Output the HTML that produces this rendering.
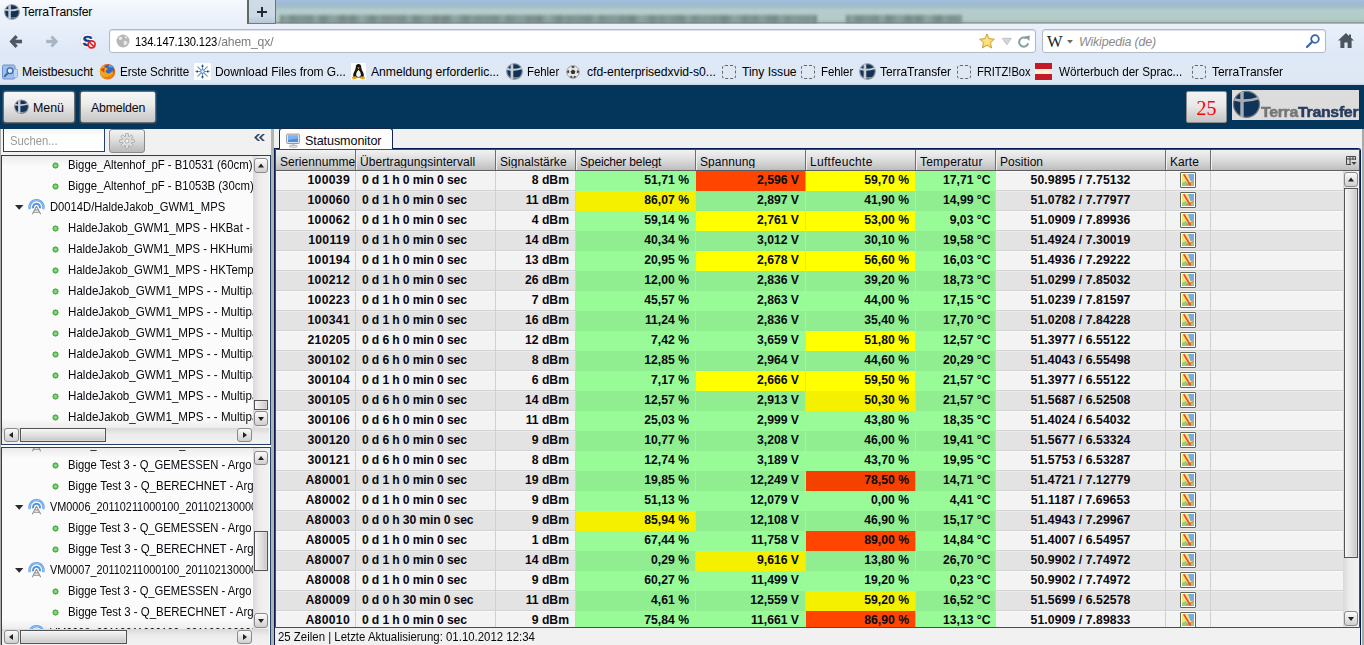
<!DOCTYPE html>
<html><head><meta charset="utf-8"><title>TerraTransfer</title>
<style>
*{box-sizing:border-box;margin:0;padding:0}
html,body{width:1364px;height:645px;overflow:hidden;background:#fff;font-family:"Liberation Sans",sans-serif;font-size:12px;color:#000}
.a{position:absolute}
svg{position:absolute;overflow:visible}
#chrome{left:0;top:0;width:1364px;height:85px;background:linear-gradient(#f6f9fd 0,#eef3fb 12px,#e9f0fa 24px,#e3ecf8 40px,#dde8f6 56px,#dfe9f6 62px,#dee8f5 83px,#c3cfde 85px)}
#glass{left:247px;top:0;width:1117px;height:24px;overflow:hidden;background:linear-gradient(#a3bfdf 0,#9fbad6 3px,#a2bbc6 6px,#b2cbcd 10px,#b4cdca 14px,#b3cbc6 19px,#a9bfba 22px,#6f7d78 23px,#e9f0f9 24px)}
.blr{position:absolute;top:15px;height:8px;background:repeating-linear-gradient(to right,rgba(80,96,94,.40) 0,rgba(80,96,94,.12) 5px,rgba(80,96,94,.44) 11px,rgba(80,96,94,.10) 19px,rgba(80,96,94,.40) 31px),repeating-linear-gradient(to right,rgba(80,96,94,.30) 0,rgba(80,96,94,.05) 9px,rgba(80,96,94,.34) 17px,rgba(80,96,94,.08) 36px,rgba(80,96,94,.30) 47px),rgba(96,112,110,.18);filter:blur(1.800px)}
#newtab{left:247px;top:0;width:29px;height:24px;background:linear-gradient(#d0dbe8,#ccd8e4 70%,#b9c6d6);border-left:2px solid #5f6a60;border-right:1px solid #6a756e;border-bottom:1px solid #6f7a80}
.tabtitle{left:22px;top:5px;font-size:12.2px;color:#000;letter-spacing:-0.2px}
.url{top:29px;height:24px;background:#fff;border:1px solid #b0b9c6;border-radius:3px;box-shadow:inset 0 1px 1px #dfe4ea}
.ut{top:35px;font-size:12.4px;white-space:nowrap;letter-spacing:-0.15px}
.bm{top:65px;font-size:12.2px;color:#000;white-space:nowrap;letter-spacing:-0.05px;transform-origin:0 0}
.dq{top:65px;width:14px;height:14px;border:1px dashed #686868;border-radius:3px}
#apphead{left:0;top:85px;width:1364px;height:44px;background:#03365a}
.btn{top:91px;height:32px;border:1px solid #6c6c6c;border-radius:2.500px;background:linear-gradient(#f6f6f6,#ececec 40%,#dedede 60%,#c6c6c6);font-size:12.400px;color:#08080f;line-height:32px;box-shadow:0 0 0 1px rgba(255,255,255,.10)}
#left{left:0;top:129px;width:271px;height:516px;background:#f1f1f1}
#split{left:271px;top:129px;width:3px;height:516px;background:#b2b2b2}
.tree{left:1px;width:270px;border:1px solid #23406c;background:#fbfbfb;overflow:hidden}
.ti{position:absolute;height:22px;line-height:22px;font-size:12.4px;white-space:nowrap;color:#08080f;letter-spacing:0;transform-origin:0 0;transform:scaleX(.915)}
.dot{position:absolute;width:7px;height:7px;border-radius:50%;background:radial-gradient(circle,#9ad494 0,#8fce8a 1.1px,#4db848 2px,#4db848 2.800px,rgba(255,255,255,.9) 3.400px)}
.vtrack{background:linear-gradient(to right,#d9d9d9,#ececec 40%,#f2f2f2)}
.htrack{background:linear-gradient(#d9d9d9,#ececec 40%,#f2f2f2)}
.sb{position:absolute;border:1px solid #8a8a8a;border-radius:3px;background:linear-gradient(#fbfbfb,#e3e3e3 55%,#cfcfcf)}
.th{position:absolute;border:1px solid #535353;border-radius:0;box-shadow:inset 0 0 0 1px rgba(255,255,255,.25)}
#right{left:274px;top:129px;width:1090px;height:516px;background:#f1f1f1}
#gridwrap{left:274px;top:148px;width:1087px;height:497px;border:1px solid #031d52;border-bottom:none;border-radius:0 3px 0 0;background:#f1f1f1}
#grid{left:275px;top:149px;width:1085px;height:479px;border:1px solid #4c4c4c;border-radius:0 2px 0 0;background:#f3f3f3;overflow:hidden}
#hdr{left:0;top:0;width:1084px;height:21px;background:linear-gradient(#f2f2f2,#dcdcdc 50%,#bdbdbd);border-bottom:1px solid #5e5e5e}
.h{position:absolute;top:0;height:20px;line-height:24px;box-shadow:1px 0 0 #f0f0f0;font-size:12px;padding-left:4px;border-right:1px solid #6e6e6e;overflow:hidden;white-space:nowrap;color:#08080f;letter-spacing:.05px}
.h span{display:block;height:18px;overflow:hidden}
.r{position:absolute;left:0;width:1068px;height:20px;background:#f3f3f3;border-bottom:1px solid #d2d2d2;border-top:1px solid #fafafa}
.r.o{background:#e3e3e3;border-top-color:#ececec}
.c{position:absolute;top:-1px;height:19px;line-height:19px;font-size:12.2px;font-weight:bold;border-right:1px solid #d0d0d0;white-space:nowrap;overflow:hidden;color:#08080f;letter-spacing:0}
.c1{left:0;width:80px;text-align:right;padding-right:5px;letter-spacing:.3px}
.c2{left:80px;width:140px;padding-left:6px;letter-spacing:-.15px}
.c3{left:220px;width:80px;text-align:right;padding-right:6px}
.c4{left:300px;width:120px;text-align:right;padding-right:6px}
.c5{left:420px;width:110px;text-align:right;padding-right:6px}
.c6{left:530px;width:110px;text-align:right;padding-right:6px}
.c7{left:640px;width:80px;text-align:right;padding-right:4.500px}
.c8{left:720px;width:170px;text-align:center;letter-spacing:.1px}
.c9{left:890px;width:45px}
.c10{left:935px;width:133px;border-right:none}
.g{background:#98fb98;height:20px;border-right-color:#b6e8b6}
.r.o .g{background:#90ee90}
.y{background:#ffff00;height:20px;border-right-color:#e0e070}
.r.o .y{background:#f4f000}
.rd{background:#ff4500;height:20px;border-right-color:#e0a080}
.r.o .rd{background:#f44100}
.mp{position:absolute;left:14px;top:1px;width:16px;height:16px}
</style></head><body>
<div id="chrome" class="a"></div>
<div id="glass" class="a"><div class="blr" style="left:33px;width:537px"></div><div class="blr" style="left:599px;width:116px"></div></div>
<div id="newtab" class="a"></div>
<svg style="left:257px;top:7px" width="10" height="10"><path d="M5 0V10M0 5H10" stroke="#1c2c3c" stroke-width="2" fill="none"/></svg>
<!-- favicon -->
<svg style="left:4px;top:4px" width="16" height="16" viewBox="0 0 16 16"><circle cx="8" cy="8" r="7.300" fill="#113358" stroke="#8a929c" stroke-width="1.100"/><path d="M2.200 12.600 Q8 16.600 13.800 12.600 Q8 14.400 2.200 12.600Z" fill="#9aa0a8"/><path d="M1 5.600 Q8 7.400 15 4.800" stroke="#c9ced4" stroke-width="1.900" fill="none"/><path d="M5.600 1.200 V14.800" stroke="#c9ced4" stroke-width="2.500"/></svg>
<div class="a tabtitle">TerraTransfer</div>
<!-- nav -->
<svg style="left:9px;top:33.500px" width="14" height="15" viewBox="0 0 14 15"><path d="M7.600 2.200 L2.600 7.500 L7.600 12.800" stroke="#4d5864" stroke-width="3.200" fill="none"/><path d="M3 7.500 H13" stroke="#4d5864" stroke-width="3.600" fill="none"/></svg>
<svg style="left:45px;top:33.500px" width="14" height="15" viewBox="0 0 14 15"><path d="M6.400 2.500 L11.200 7.500 L6.400 12.500" stroke="#a7b5c5" stroke-width="3" fill="none"/><path d="M1.200 7.500 H11" stroke="#a7b5c5" stroke-width="3.400" fill="none"/></svg>
<svg style="left:80px;top:33px" width="17" height="17" viewBox="0 0 17 17"><circle cx="7.800" cy="7.800" r="7.600" fill="#f6f8fb" stroke="#cdd4de" stroke-width=".7"/><text x="2.400" y="13.300" font-family="Liberation Sans" font-weight="bold" font-size="15.500" fill="#123a8c" stroke="#123a8c" stroke-width=".5">S</text><circle cx="11.600" cy="11.300" r="3.500" fill="#fff" stroke="#e81c1c" stroke-width="1.700"/><path d="M9.300 9 L13.900 13.600" stroke="#e81c1c" stroke-width="1.600"/></svg>
<div class="a url" style="left:109px;width:927px"></div>
<svg style="left:116px;top:34px" width="14" height="14" viewBox="0 0 14 14"><circle cx="7" cy="7" r="6.5" fill="#b7b7b7"/><path d="M3 3 Q6 2 6.5 4.5 Q5 6.5 3.2 6 Z M7.5 7 Q10.5 6 11.5 8.5 Q10 12 8 11 Z M8.5 2 Q10.5 2.2 11.5 4 L9.5 4.5Z" fill="#e9e9e9"/></svg>
<div class="a ut" style="left:135px;color:#000;transform-origin:0 0;transform:scaleX(.905)">134.147.130.123</div><div class="a ut" style="left:217.500px;color:#7c7c7c;transform-origin:0 0;transform:scaleX(.98)">/ahem_qx/</div>
<svg style="left:979px;top:33px" width="16" height="16" viewBox="0 0 16 16"><path d="M8 .8 L10.2 5.6 L15.4 6.2 L11.5 9.7 L12.6 15 L8 12.3 L3.4 15 L4.5 9.7 L.6 6.2 L5.8 5.6 Z" fill="#f6d55a" stroke="#c99a3c" stroke-width=".9"/><path d="M8 3.500 L9.400 6.500 L12.600 6.900 L10.200 9.100 L10.900 12.400 L8 10.700 L5.100 12.400 L5.800 9.100 L3.400 6.900 L6.600 6.500 Z" fill="#fbe89a" opacity=".7"/></svg>
<svg style="left:1001.500px;top:38px" width="10" height="7"><path d="M.3 .3H9.300L4.800 6.800Z" fill="#d3d6db" stroke="#b4b9c1" stroke-width=".8"/></svg>
<svg style="left:1016.800px;top:34.600px" width="14" height="14" viewBox="0 0 14 14"><path d="M11.200 8.200 A4.600 4.600 0 1 1 9.600 3.400" stroke="#86a0a2" stroke-width="2" fill="none"/><path d="M7.600 1.400 L12.800 .4 L12.400 6 Z" fill="#86a0a2"/></svg>
<div class="a url" style="left:1042px;width:284px"></div>
<div class="a" style="left:1047px;top:32px;font-family:'Liberation Serif',serif;font-size:16.500px;color:#222;letter-spacing:-1px;line-height:20px">W</div>
<svg style="left:1066.500px;top:40px" width="6" height="4"><path d="M0 0H6L3 3.500Z" fill="#6a6a6a"/></svg>
<div class="a ut" style="left:1079px;color:#8a8a8a;font-style:italic">Wikipedia (de)</div>
<svg style="left:1305px;top:33px" width="16" height="16" viewBox="0 0 16 16"><circle cx="10" cy="6" r="3.8" fill="#fff" stroke="#3a66a8" stroke-width="1.8"/><path d="M7.2 8.8 L2 14" stroke="#3a66a8" stroke-width="2.2" stroke-linecap="round"/></svg>
<svg style="left:1337px;top:32px" width="18" height="17" viewBox="0 0 18 17"><path d="M9 1 L1 8.6 H3.4 V16 H7.4 V10.6 H10.6 V16 H14.6 V8.6 H17 L14 5.8 V2.4 H12 V3.9 Z" fill="#4a5560"/></svg>
<!-- bookmarks -->
<svg style="left:2px;top:64px" width="16" height="16" viewBox="0 0 16 16"><rect x=".5" y="1" width="12.500" height="14" rx="1.500" fill="#9dbfe8" stroke="#6a92c8"/><rect x="11.500" y="5" width="4" height="8.500" rx="1" fill="#bdd5f0" stroke="#7ea2d0" stroke-width=".7"/><circle cx="8" cy="6.800" r="2.900" fill="#dbe9f8" stroke="#3866a8" stroke-width="1.300"/><path d="M5.800 9 L2.800 12.200" stroke="#3866a8" stroke-width="1.900" stroke-linecap="round"/></svg>
<div class="a bm" style="left:22px">Meistbesucht</div>
<svg style="left:99px;top:63px" width="17" height="17" viewBox="0 0 17 17"><circle cx="8.500" cy="8.800" r="7.700" fill="#e56a12"/><circle cx="9.800" cy="6.800" r="5.200" fill="#3468c0"/><path d="M9.800 1.600 Q13 2 14.600 5 Q12 3.800 9.800 4.400Z" fill="#6c9be0"/><path d="M1.400 5.600 Q2.600 2.800 5.400 1.600 Q4.600 3.400 5.600 4.600 Q7.800 4.400 9 6.200 Q6.800 6.600 6.600 8.400 Q7.600 10.800 10.400 10.400 Q12.600 9.800 13.400 7.600 Q14.600 10 13.400 12.600 Q11.200 16 7.600 15.800 Q2.600 15.200 1 10.600 Q.6 7.600 1.400 5.600Z" fill="#f3a51e"/><path d="M1.600 6.200 Q2.800 8.800 5.400 9.600 Q5 7.400 5.800 5 Q3.400 4.800 1.600 6.200Z" fill="#d94a12"/><path d="M3 12 Q6 14.800 10 13.600 Q12.600 12.600 13.600 10 Q13.200 13.600 10 15.200 Q6 16.200 3 12Z" fill="#e8791a"/></svg>
<div class="a bm" style="left:120px;transform:scaleX(.955)">Erste Schritte</div>
<svg style="left:194px;top:63px" width="17" height="17" viewBox="0 0 17 17"><rect width="17" height="17" fill="#fdfdfd"/><g stroke="#5b8fca" stroke-width="1.050" stroke-linecap="round"><path d="M8.500 1.800V15.200M1.800 8.500H15.200M3.800 3.800L13.200 13.200M13.200 3.800L3.800 13.200"/></g><g stroke="#8ab2de" stroke-width=".8"><path d="M7 2.800L8.500 4.200L10 2.800M7 14.200L8.500 12.800L10 14.200M2.800 7L4.200 8.500L2.800 10M14.200 7L12.800 8.500L14.200 10"/></g><circle cx="8.500" cy="8.500" r="1.800" fill="#eaf2fb" stroke="#4f86c6" stroke-width=".9"/></svg>
<div class="a bm" style="left:215px;transform:scaleX(.985)">Download Files from G...</div>
<svg style="left:351px;top:63px" width="15" height="17" viewBox="0 0 15 17"><rect width="15" height="17" fill="#fff"/><path d="M7.500 1 Q10.200 1 10.200 4.200 Q10.400 6.500 12.200 9.500 Q13.600 12.500 12.400 14.500 L2.600 14.500 Q1.400 12.500 2.800 9.500 Q4.600 6.500 4.800 4.200 Q4.800 1 7.500 1Z" fill="#161616"/><path d="M7.500 6.800 Q9.600 8.500 10 12 Q9.600 14 7.500 14 Q5.400 14 5 12 Q5.400 8.500 7.500 6.800Z" fill="#f4f4f4"/><path d="M6.200 4.600 L8.800 4.600 L7.500 6.200Z" fill="#f0a800"/><path d="M1 14 L5.200 13.200 L5.600 16 L1.600 16.400Z M14 14 L9.800 13.200 L9.400 16 L13.400 16.400Z" fill="#f0a800"/></svg>
<div class="a bm" style="left:371px">Anmeldung erforderlic...</div>
<svg style="left:506px;top:63px" width="17" height="17" viewBox="0 0 16 16"><circle cx="8" cy="8" r="7.300" fill="#113358" stroke="#8a929c" stroke-width="1.100"/><path d="M2.200 12.600 Q8 16.600 13.800 12.600 Q8 14.400 2.200 12.600Z" fill="#9aa0a8"/><path d="M1 5.600 Q8 7.400 15 4.800" stroke="#c9ced4" stroke-width="1.900" fill="none"/><path d="M5.600 1.200 V14.800" stroke="#c9ced4" stroke-width="2.500"/></svg>
<div class="a bm" style="left:527px;transform:scaleX(.94)">Fehler</div>
<svg style="left:566px;top:65px" width="14" height="14" viewBox="0 0 14 14"><circle cx="7" cy="7" r="6.300" fill="#e6e6e6" stroke="#8a8a8a" stroke-width=".8"/><path d="M7 4.400 L9.400 6.200 L8.500 9 L5.500 9 L4.600 6.200Z" fill="#333"/><path d="M7 .8 L9 2 L7 3.200 L5 2Z M1 6 L2.800 5 L3.400 7.400 L1.600 8.600Z M13 6 L11.200 5 L10.600 7.400 L12.400 8.600Z M4 11.200 L6 10.800 L6.600 13 L4.600 12.800Z M10 11.200 L8 10.800 L7.400 13 L9.400 12.800Z" fill="#444"/></svg>
<div class="a bm" style="left:587px">cfd-enterprisedxvid-s0...</div>
<div class="a dq" style="left:722px"></div>
<div class="a bm" style="left:742px">Tiny Issue</div>
<div class="a dq" style="left:801px"></div>
<div class="a bm" style="left:821px;transform:scaleX(.94)">Fehler</div>
<svg style="left:859px;top:63px" width="17" height="17" viewBox="0 0 16 16"><circle cx="8" cy="8" r="7.300" fill="#113358" stroke="#8a929c" stroke-width="1.100"/><path d="M2.200 12.600 Q8 16.600 13.800 12.600 Q8 14.400 2.200 12.600Z" fill="#9aa0a8"/><path d="M1 5.600 Q8 7.400 15 4.800" stroke="#c9ced4" stroke-width="1.900" fill="none"/><path d="M5.600 1.200 V14.800" stroke="#c9ced4" stroke-width="2.500"/></svg>
<div class="a bm" style="left:880px;transform:scaleX(.985)">TerraTransfer</div>
<div class="a dq" style="left:957px"></div>
<div class="a bm" style="left:977px;transform:scaleX(.915)">FRITZ!Box</div>
<div class="a" style="left:1035px;top:63px;width:17px;height:17px;background:linear-gradient(#c41a28 0,#c41a28 33%,#fdf0d4 33%,#fdf0d4 66%,#c41a28 66%)"></div>
<div class="a bm" style="left:1059px;transform:scaleX(.96)">Wörterbuch der Sprac...</div>
<div class="a dq" style="left:1192px"></div>
<div class="a bm" style="left:1212px;transform:scaleX(.985)">TerraTransfer</div>
<!-- app header -->
<div id="apphead" class="a"></div>
<div class="a btn" style="left:3px;width:72px;padding-left:29px">Menü</div>
<svg style="left:13.500px;top:99px" width="15" height="15.500" viewBox="0 0 16 16"><circle cx="8" cy="8" r="7.300" fill="#113358" stroke="#8a929c" stroke-width="1.100"/><path d="M2.200 12.600 Q8 16.600 13.800 12.600 Q8 14.400 2.200 12.600Z" fill="#9aa0a8"/><path d="M1 5.600 Q8 7.400 15 4.800" stroke="#c9ced4" stroke-width="1.900" fill="none"/><path d="M5.600 1.200 V14.800" stroke="#c9ced4" stroke-width="2.500"/></svg>
<div class="a btn" style="left:80px;width:76px;text-align:center;letter-spacing:-.2px">Abmelden</div>
<div class="a" style="left:1186px;top:91px;width:41px;height:32px;border:1px solid #8d8d8d;border-radius:2px;background:linear-gradient(#f3f3f3,#e9e9e9 45%,#c4c4c4);font-family:'Liberation Serif',serif;font-size:20px;color:#f00;text-align:center;line-height:32px">25</div>
<div class="a" style="left:1232px;top:90px;width:127px;height:30px;background:#dcdcdc"></div>
<svg style="left:1233px;top:90px" width="28" height="29" viewBox="0 0 28 29"><circle cx="13.500" cy="14.300" r="13" fill="#10335a" stroke="#6f767e" stroke-width="1.200"/><path d="M1.500 9.500 Q13 12.500 26 8" stroke="#a9adb2" stroke-width="2.800" fill="none"/><path d="M9 2 V27" stroke="#a9adb2" stroke-width="3.400"/></svg>
<div class="a" id="logot" style="left:1260.500px;top:104px;font-size:15.500px;font-weight:bold;line-height:16px;white-space:nowrap;transform-origin:0 0;transform:scaleX(1.025);letter-spacing:-.3px;-webkit-text-stroke:.5px currentColor"><span style="color:#767676">Terra</span><span style="color:#2a3c5e">Transfer</span></div>

<!-- left panel -->
<div id="left" class="a"></div>
<div id="split" class="a"></div>
<div class="a" style="left:0;top:129px;width:1px;height:516px;background:#adadad"></div>
<div class="a" style="left:3px;top:129px;width:102px;height:23px;background:#fff;border:1px solid #23406c;border-top:none;font-size:12.4px;color:#9a9a9a;padding:5px 0 0 6px;background:linear-gradient(#f4f4f4,#fff 8px)"><span style="display:inline-block;transform-origin:0 0;transform:scaleX(.91)">Suchen...</span></div>
<div class="a" style="left:109px;top:129px;width:36px;height:24px;border:1px solid #8a8a8a;border-radius:3px;background:linear-gradient(#f2f2f2,#dedede 45%,#b9b9b9)"></div>
<svg style="left:119px;top:133px" width="16" height="16" viewBox="0 0 16 16"><g fill="#dedede" stroke="#a6a6a6" stroke-width=".9"><rect x="6.600" y=".6" width="2.800" height="3.400" rx=".5" transform="rotate(0 8 8)"/><rect x="6.600" y=".6" width="2.800" height="3.400" rx=".5" transform="rotate(45 8 8)"/><rect x="6.600" y=".6" width="2.800" height="3.400" rx=".5" transform="rotate(90 8 8)"/><rect x="6.600" y=".6" width="2.800" height="3.400" rx=".5" transform="rotate(135 8 8)"/><rect x="6.600" y=".6" width="2.800" height="3.400" rx=".5" transform="rotate(180 8 8)"/><rect x="6.600" y=".6" width="2.800" height="3.400" rx=".5" transform="rotate(225 8 8)"/><rect x="6.600" y=".6" width="2.800" height="3.400" rx=".5" transform="rotate(270 8 8)"/><rect x="6.600" y=".6" width="2.800" height="3.400" rx=".5" transform="rotate(315 8 8)"/><circle cx="8" cy="8" r="5"/></g><circle cx="8" cy="8" r="4.500" fill="#dedede"/><g fill="#dedede"><rect x="7.100" y="1.200" width="1.800" height="3" transform="rotate(0 8 8)"/><rect x="7.100" y="1.200" width="1.800" height="3" transform="rotate(45 8 8)"/><rect x="7.100" y="1.200" width="1.800" height="3" transform="rotate(90 8 8)"/><rect x="7.100" y="1.200" width="1.800" height="3" transform="rotate(135 8 8)"/><rect x="7.100" y="1.200" width="1.800" height="3" transform="rotate(180 8 8)"/><rect x="7.100" y="1.200" width="1.800" height="3" transform="rotate(225 8 8)"/><rect x="7.100" y="1.200" width="1.800" height="3" transform="rotate(270 8 8)"/><rect x="7.100" y="1.200" width="1.800" height="3" transform="rotate(315 8 8)"/></g><circle cx="8" cy="8" r="2.100" fill="#f4f4f4" stroke="#a6a6a6" stroke-width=".9"/></svg>
<svg style="left:253.500px;top:134px" width="11" height="7" viewBox="0 0 11 7"><path d="M3.800 0 L0 3.500 L3.800 7 H6.200 L2.600 3.500 L6.200 0 Z M8.600 0 L4.800 3.500 L8.600 7 H11 L7.400 3.500 L11 0 Z" fill="#34486a"/></svg>
<div class="a tree" style="top:155px;height:290px">
<div class="a" style="left:0;top:0;width:252px;height:272px;overflow:hidden;background:linear-gradient(#ebebeb 0,#fbfbfb 10px,#fbfbfb 262px,#ededed 272px)">
<div class="dot" style="left:49.500px;top:5.5px"></div><div class="ti" style="left:66px;top:-2px;transform:scaleX(0.917)">Bigge_Altenhof_pF - B10531 (60cm)</div>
<div class="dot" style="left:49.500px;top:26.5px"></div><div class="ti" style="left:66px;top:19px;transform:scaleX(0.917)">Bigge_Altenhof_pF - B1053B (30cm)</div>
<svg style="left:12.800px;top:49px" width="9" height="6"><path d="M0 0H8.400L4.200 4.800Z" fill="#2b2b2b"/></svg><svg style="left:25.500px;top:42px" width="17" height="17" viewBox="0 0 17 17"><path d="M1.780 11.180 A7 7 0 1 1 15.220 11.180" stroke="#5f9fe8" stroke-width="2.300" fill="none"/><path d="M1.780 11.180 A7 7 0 1 1 15.220 11.180" stroke="#a8cbf4" stroke-width=".7" fill="none"/><path d="M5.140 10.160 A3.500 3.500 0 1 1 11.860 10.160" stroke="#4f94e4" stroke-width="2" fill="none"/><path d="M8.500 8.300 L4.300 16.300 M8.500 8.300 L12.700 16.300 M6.800 12 H10.200 M5.800 14.200 H11.200" stroke="#8e8e8e" stroke-width="1.050" fill="none"/></svg><div class="ti" style="left:47.500px;top:40px;transform:scaleX(.905)">D0014D/HaldeJakob_GWM1_MPS</div>
<div class="dot" style="left:49.500px;top:68.5px"></div><div class="ti" style="left:66px;top:61px;transform:scaleX(0.913)">HaldeJakob_GWM1_MPS - HKBat -</div>
<div class="dot" style="left:49.500px;top:89.5px"></div><div class="ti" style="left:66px;top:82px;transform:scaleX(0.913)">HaldeJakob_GWM1_MPS - HKHumid</div>
<div class="dot" style="left:49.500px;top:110.5px"></div><div class="ti" style="left:66px;top:103px;transform:scaleX(0.913)">HaldeJakob_GWM1_MPS - HKTemper</div>
<div class="dot" style="left:49.500px;top:131.5px"></div><div class="ti" style="left:66px;top:124px;transform:scaleX(0.937)">HaldeJakob_GWM1_MPS - - Multiparam</div>
<div class="dot" style="left:49.500px;top:152.5px"></div><div class="ti" style="left:66px;top:145px;transform:scaleX(0.937)">HaldeJakob_GWM1_MPS - - Multiparam</div>
<div class="dot" style="left:49.500px;top:173.5px"></div><div class="ti" style="left:66px;top:166px;transform:scaleX(0.937)">HaldeJakob_GWM1_MPS - - Multiparam</div>
<div class="dot" style="left:49.500px;top:194.5px"></div><div class="ti" style="left:66px;top:187px;transform:scaleX(0.937)">HaldeJakob_GWM1_MPS - - Multiparam</div>
<div class="dot" style="left:49.500px;top:215.5px"></div><div class="ti" style="left:66px;top:208px;transform:scaleX(0.937)">HaldeJakob_GWM1_MPS - - Multiparam</div>
<div class="dot" style="left:49.500px;top:236.5px"></div><div class="ti" style="left:66px;top:229px;transform:scaleX(0.937)">HaldeJakob_GWM1_MPS - - Multiparam</div>
<div class="dot" style="left:49.500px;top:257.5px"></div><div class="ti" style="left:66px;top:250px;transform:scaleX(0.937)">HaldeJakob_GWM1_MPS - - Multiparam</div>
</div>
<div class="a vtrack" style="left:251px;top:0;width:16px;height:272px"></div>
<div class="sb" style="left:252px;top:2px;width:14px;height:15px"><svg style="left:-1px;top:-1px" width="14" height="15"><path d="M4.0 9.5H10.0L7.0 5.5Z" fill="#222"/></svg></div>
<div class="th" style="left:252px;top:244px;width:14px;height:10px;background:linear-gradient(to right,#f6f6f6,#dcdcdc 60%,#c6c6c6)"></div>
<div class="sb" style="left:252px;top:255px;width:14px;height:15px"><svg style="left:-1px;top:-1px" width="14" height="15"><path d="M4.0 6.0H10.0L7.0 10.0Z" fill="#222"/></svg></div>
<div class="a htrack" style="left:0;top:272px;width:267px;height:16px"></div>
<div class="sb" style="left:2px;top:272px;width:15px;height:14px"><svg style="left:-1px;top:-1px" width="15" height="14"><path d="M9.0 4.0V10.0L5.0 7.0Z" fill="#222"/></svg></div>
<div class="th" style="left:18px;top:272px;width:86px;height:14px;background:linear-gradient(to bottom,#f6f6f6,#dcdcdc 60%,#c6c6c6)"></div>
<div class="sb" style="left:235px;top:272px;width:15px;height:14px"><svg style="left:-1px;top:-1px" width="15" height="14"><path d="M6.0 4.0V10.0L10.0 7.0Z" fill="#222"/></svg></div>
</div>
<div class="a" style="left:1px;top:445px;width:270px;height:2px;background:#fdfdfd"></div>
<div class="a tree" style="top:447px;height:198px;border-bottom:none">
<div class="a" style="left:0;top:0;width:252px;height:181px;overflow:hidden;background:linear-gradient(#ebebeb 0,#fbfbfb 10px,#fbfbfb 171px,#ededed 181px)">
<svg style="left:12.800px;top:-6px" width="9" height="6"><path d="M0 0H8.400L4.200 4.800Z" fill="#2b2b2b"/></svg><svg style="left:25.500px;top:-13px" width="17" height="17" viewBox="0 0 17 17"><path d="M1.780 11.180 A7 7 0 1 1 15.220 11.180" stroke="#5f9fe8" stroke-width="2.300" fill="none"/><path d="M1.780 11.180 A7 7 0 1 1 15.220 11.180" stroke="#a8cbf4" stroke-width=".7" fill="none"/><path d="M5.140 10.160 A3.500 3.500 0 1 1 11.860 10.160" stroke="#4f94e4" stroke-width="2" fill="none"/><path d="M8.500 8.300 L4.300 16.300 M8.500 8.300 L12.700 16.300 M6.800 12 H10.200 M5.800 14.200 H11.200" stroke="#8e8e8e" stroke-width="1.050" fill="none"/></svg><div class="ti" style="left:47.500px;top:-15px;transform:scaleX(.876)">VM0005_20110211000100_201102130000</div>
<div class="dot" style="left:49.500px;top:13.5px"></div><div class="ti" style="left:66px;top:6px;transform:scaleX(0.907)">Bigge Test 3 - Q_GEMESSEN - Argo</div>
<div class="dot" style="left:49.500px;top:34.5px"></div><div class="ti" style="left:66px;top:27px;transform:scaleX(0.922)">Bigge Test 3 - Q_BERECHNET - Argo</div>
<svg style="left:12.800px;top:57px" width="9" height="6"><path d="M0 0H8.400L4.200 4.800Z" fill="#2b2b2b"/></svg><svg style="left:25.500px;top:50px" width="17" height="17" viewBox="0 0 17 17"><path d="M1.780 11.180 A7 7 0 1 1 15.220 11.180" stroke="#5f9fe8" stroke-width="2.300" fill="none"/><path d="M1.780 11.180 A7 7 0 1 1 15.220 11.180" stroke="#a8cbf4" stroke-width=".7" fill="none"/><path d="M5.140 10.160 A3.500 3.500 0 1 1 11.860 10.160" stroke="#4f94e4" stroke-width="2" fill="none"/><path d="M8.500 8.300 L4.300 16.300 M8.500 8.300 L12.700 16.300 M6.800 12 H10.200 M5.800 14.200 H11.200" stroke="#8e8e8e" stroke-width="1.050" fill="none"/></svg><div class="ti" style="left:47.500px;top:48px;transform:scaleX(.876)">VM0006_20110211000100_201102130000</div>
<div class="dot" style="left:49.500px;top:76.5px"></div><div class="ti" style="left:66px;top:69px;transform:scaleX(0.907)">Bigge Test 3 - Q_GEMESSEN - Argo</div>
<div class="dot" style="left:49.500px;top:97.5px"></div><div class="ti" style="left:66px;top:90px;transform:scaleX(0.922)">Bigge Test 3 - Q_BERECHNET - Argo</div>
<svg style="left:12.800px;top:120px" width="9" height="6"><path d="M0 0H8.400L4.200 4.800Z" fill="#2b2b2b"/></svg><svg style="left:25.500px;top:113px" width="17" height="17" viewBox="0 0 17 17"><path d="M1.780 11.180 A7 7 0 1 1 15.220 11.180" stroke="#5f9fe8" stroke-width="2.300" fill="none"/><path d="M1.780 11.180 A7 7 0 1 1 15.220 11.180" stroke="#a8cbf4" stroke-width=".7" fill="none"/><path d="M5.140 10.160 A3.500 3.500 0 1 1 11.860 10.160" stroke="#4f94e4" stroke-width="2" fill="none"/><path d="M8.500 8.300 L4.300 16.300 M8.500 8.300 L12.700 16.300 M6.800 12 H10.200 M5.800 14.200 H11.200" stroke="#8e8e8e" stroke-width="1.050" fill="none"/></svg><div class="ti" style="left:47.500px;top:111px;transform:scaleX(.876)">VM0007_20110211000100_201102130000</div>
<div class="dot" style="left:49.500px;top:139.5px"></div><div class="ti" style="left:66px;top:132px;transform:scaleX(0.907)">Bigge Test 3 - Q_GEMESSEN - Argo</div>
<div class="dot" style="left:49.500px;top:160.5px"></div><div class="ti" style="left:66px;top:153px;transform:scaleX(0.922)">Bigge Test 3 - Q_BERECHNET - Argo</div>
<svg style="left:12.800px;top:183px" width="9" height="6"><path d="M0 0H8.400L4.200 4.800Z" fill="#2b2b2b"/></svg><svg style="left:25.500px;top:176px" width="17" height="17" viewBox="0 0 17 17"><path d="M1.780 11.180 A7 7 0 1 1 15.220 11.180" stroke="#5f9fe8" stroke-width="2.300" fill="none"/><path d="M1.780 11.180 A7 7 0 1 1 15.220 11.180" stroke="#a8cbf4" stroke-width=".7" fill="none"/><path d="M5.140 10.160 A3.500 3.500 0 1 1 11.860 10.160" stroke="#4f94e4" stroke-width="2" fill="none"/><path d="M8.500 8.300 L4.300 16.300 M8.500 8.300 L12.700 16.300 M6.800 12 H10.200 M5.800 14.200 H11.200" stroke="#8e8e8e" stroke-width="1.050" fill="none"/></svg><div class="ti" style="left:47.500px;top:174px;transform:scaleX(.876)">VM0008_20110211000100_201102130000</div>
</div>
<div class="a vtrack" style="left:251px;top:0;width:16px;height:181px"></div>
<div class="sb" style="left:252px;top:3px;width:14px;height:14px"><svg style="left:-1px;top:-1px" width="14" height="14"><path d="M4.0 9.0H10.0L7.0 5.0Z" fill="#222"/></svg></div>
<div class="th" style="left:252px;top:83px;width:14px;height:40px;background:linear-gradient(to right,#f6f6f6,#dcdcdc 60%,#c6c6c6)"></div>
<div class="sb" style="left:252px;top:165px;width:14px;height:15px"><svg style="left:-1px;top:-1px" width="14" height="15"><path d="M4.0 6.0H10.0L7.0 10.0Z" fill="#222"/></svg></div>
<div class="a htrack" style="left:0;top:181px;width:267px;height:16px"></div>
<div class="sb" style="left:2px;top:182px;width:15px;height:14px"><svg style="left:-1px;top:-1px" width="15" height="14"><path d="M9.0 4.0V10.0L5.0 7.0Z" fill="#222"/></svg></div>
<div class="th" style="left:18px;top:182px;width:107px;height:14px;background:linear-gradient(to bottom,#f6f6f6,#dcdcdc 60%,#c6c6c6)"></div>
<div class="sb" style="left:235px;top:182px;width:15px;height:14px"><svg style="left:-1px;top:-1px" width="15" height="14"><path d="M6.0 4.0V10.0L10.0 7.0Z" fill="#222"/></svg></div>
</div>
<!-- right panel -->
<div id="right" class="a"></div>
<div class="a" style="left:279px;top:128px;width:114px;height:21px;background:#fdfdfd;border:1px solid #14284a;border-bottom:none;border-radius:3px 3px 0 0;z-index:3"></div>

<svg style="left:286px;top:133px;z-index:4" width="14" height="15" viewBox="0 0 15 15"><rect x=".7" y=".7" width="13.600" height="10" rx="1" fill="#f0f0f0" stroke="#8a8f96" stroke-width="1"/><rect x="2.200" y="2.200" width="10.600" height="7" fill="#4b8fe0"/><path d="M2.200 2.200H12.800V5L2.200 7Z" fill="#7db2f0"/><path d="M6 11.200H9.500V12.800H6Z" fill="#d4d4d4"/><rect x="3.700" y="12.700" width="8" height="1.900" rx=".7" fill="#fbfbfb" stroke="#8e8e8e" stroke-width=".7"/></svg>
<div class="a" style="z-index:4;left:305px;top:134px;font-size:12.6px;color:#08080f;letter-spacing:-.1px">Statusmonitor</div>
<div id="gridwrap" class="a"></div>
<div id="grid" class="a">
<div id="hdr" class="a">
<div class="h" style="left:0;width:80px"><span>Seriennummer</span></div>
<div class="h" style="left:80px;width:140px"><span>Übertragungsintervall</span></div>
<div class="h" style="left:220px;width:80px"><span>Signalstärke</span></div>
<div class="h" style="left:300px;width:120px;letter-spacing:-.15px"><span>Speicher belegt</span></div>
<div class="h" style="left:420px;width:110px"><span>Spannung</span></div>
<div class="h" style="left:530px;width:110px;letter-spacing:.3px"><span>Luftfeuchte</span></div>
<div class="h" style="left:640px;width:80px;letter-spacing:.2px"><span>Temperatur</span></div>
<div class="h" style="left:720px;width:170px"><span>Position</span></div>
<div class="h" style="left:890px;width:45px"><span>Karte</span></div>
<svg style="left:1070px;top:6px" width="11" height="10" viewBox="0 0 11 10"><path d="M.5 .5H9.500V4M.5 .5V8.500H5M.5 3H9.500M4 .5V8.500M7 .5V4" stroke="#444" stroke-width="1" fill="none"/><path d="M5.500 6H10.500L8 9Z" fill="#444"/></svg>
</div>
<div class="r" style="top:21px"><div class="c c1">100039</div><div class="c c2">0 d 1 h 0 min 0 sec</div><div class="c c3">8 dBm</div><div class="c c4 g">51,71 %</div><div class="c c5 rd">2,596 V</div><div class="c c6 y">59,70 %</div><div class="c c7 g">17,71 °C</div><div class="c c8">50.9895 / 7.75132</div><div class="c c9"><svg class="mp" width="16" height="16" viewBox="0 0 16 16"><rect x=".5" y=".5" width="15" height="15" rx=".4" fill="#fff" stroke="#5c665a" stroke-width="1"/><rect x="2" y="2" width="12" height="12" fill="#efe878"/><path d="M8 2H14V8.500L10.500 9Z" fill="#7aa8e0"/><path d="M2 11 L5.500 9 L8 11.500 L14 9.500 V14 H2Z" fill="#8fd07e"/><path d="M6.500 13.200 L14 9" stroke="#e88a2a" stroke-width="1.400"/><path d="M3.800 2.200 L10.600 13.600" stroke="#f0443c" stroke-width="1.700"/></svg></div><div class="c c10"></div></div>
<div class="r o" style="top:41px"><div class="c c1">100060</div><div class="c c2">0 d 1 h 0 min 0 sec</div><div class="c c3">11 dBm</div><div class="c c4 y">86,07 %</div><div class="c c5 g">2,897 V</div><div class="c c6 g">41,90 %</div><div class="c c7 g">14,99 °C</div><div class="c c8">51.0782 / 7.77977</div><div class="c c9"><svg class="mp" width="16" height="16" viewBox="0 0 16 16"><rect x=".5" y=".5" width="15" height="15" rx=".4" fill="#fff" stroke="#5c665a" stroke-width="1"/><rect x="2" y="2" width="12" height="12" fill="#efe878"/><path d="M8 2H14V8.500L10.500 9Z" fill="#7aa8e0"/><path d="M2 11 L5.500 9 L8 11.500 L14 9.500 V14 H2Z" fill="#8fd07e"/><path d="M6.500 13.200 L14 9" stroke="#e88a2a" stroke-width="1.400"/><path d="M3.800 2.200 L10.600 13.600" stroke="#f0443c" stroke-width="1.700"/></svg></div><div class="c c10"></div></div>
<div class="r" style="top:61px"><div class="c c1">100062</div><div class="c c2">0 d 1 h 0 min 0 sec</div><div class="c c3">4 dBm</div><div class="c c4 g">59,14 %</div><div class="c c5 y">2,761 V</div><div class="c c6 y">53,00 %</div><div class="c c7 g">9,03 °C</div><div class="c c8">51.0909 / 7.89936</div><div class="c c9"><svg class="mp" width="16" height="16" viewBox="0 0 16 16"><rect x=".5" y=".5" width="15" height="15" rx=".4" fill="#fff" stroke="#5c665a" stroke-width="1"/><rect x="2" y="2" width="12" height="12" fill="#efe878"/><path d="M8 2H14V8.500L10.500 9Z" fill="#7aa8e0"/><path d="M2 11 L5.500 9 L8 11.500 L14 9.500 V14 H2Z" fill="#8fd07e"/><path d="M6.500 13.200 L14 9" stroke="#e88a2a" stroke-width="1.400"/><path d="M3.800 2.200 L10.600 13.600" stroke="#f0443c" stroke-width="1.700"/></svg></div><div class="c c10"></div></div>
<div class="r o" style="top:81px"><div class="c c1">100119</div><div class="c c2">0 d 1 h 0 min 0 sec</div><div class="c c3">14 dBm</div><div class="c c4 g">40,34 %</div><div class="c c5 g">3,012 V</div><div class="c c6 g">30,10 %</div><div class="c c7 g">19,58 °C</div><div class="c c8">51.4924 / 7.30019</div><div class="c c9"><svg class="mp" width="16" height="16" viewBox="0 0 16 16"><rect x=".5" y=".5" width="15" height="15" rx=".4" fill="#fff" stroke="#5c665a" stroke-width="1"/><rect x="2" y="2" width="12" height="12" fill="#efe878"/><path d="M8 2H14V8.500L10.500 9Z" fill="#7aa8e0"/><path d="M2 11 L5.500 9 L8 11.500 L14 9.500 V14 H2Z" fill="#8fd07e"/><path d="M6.500 13.200 L14 9" stroke="#e88a2a" stroke-width="1.400"/><path d="M3.800 2.200 L10.600 13.600" stroke="#f0443c" stroke-width="1.700"/></svg></div><div class="c c10"></div></div>
<div class="r" style="top:101px"><div class="c c1">100194</div><div class="c c2">0 d 1 h 0 min 0 sec</div><div class="c c3">13 dBm</div><div class="c c4 g">20,95 %</div><div class="c c5 y">2,678 V</div><div class="c c6 y">56,60 %</div><div class="c c7 g">16,03 °C</div><div class="c c8">51.4936 / 7.29222</div><div class="c c9"><svg class="mp" width="16" height="16" viewBox="0 0 16 16"><rect x=".5" y=".5" width="15" height="15" rx=".4" fill="#fff" stroke="#5c665a" stroke-width="1"/><rect x="2" y="2" width="12" height="12" fill="#efe878"/><path d="M8 2H14V8.500L10.500 9Z" fill="#7aa8e0"/><path d="M2 11 L5.500 9 L8 11.500 L14 9.500 V14 H2Z" fill="#8fd07e"/><path d="M6.500 13.200 L14 9" stroke="#e88a2a" stroke-width="1.400"/><path d="M3.800 2.200 L10.600 13.600" stroke="#f0443c" stroke-width="1.700"/></svg></div><div class="c c10"></div></div>
<div class="r o" style="top:121px"><div class="c c1">100212</div><div class="c c2">0 d 1 h 0 min 0 sec</div><div class="c c3">26 dBm</div><div class="c c4 g">12,00 %</div><div class="c c5 g">2,836 V</div><div class="c c6 g">39,20 %</div><div class="c c7 g">18,73 °C</div><div class="c c8">51.0299 / 7.85032</div><div class="c c9"><svg class="mp" width="16" height="16" viewBox="0 0 16 16"><rect x=".5" y=".5" width="15" height="15" rx=".4" fill="#fff" stroke="#5c665a" stroke-width="1"/><rect x="2" y="2" width="12" height="12" fill="#efe878"/><path d="M8 2H14V8.500L10.500 9Z" fill="#7aa8e0"/><path d="M2 11 L5.500 9 L8 11.500 L14 9.500 V14 H2Z" fill="#8fd07e"/><path d="M6.500 13.200 L14 9" stroke="#e88a2a" stroke-width="1.400"/><path d="M3.800 2.200 L10.600 13.600" stroke="#f0443c" stroke-width="1.700"/></svg></div><div class="c c10"></div></div>
<div class="r" style="top:141px"><div class="c c1">100223</div><div class="c c2">0 d 1 h 0 min 0 sec</div><div class="c c3">7 dBm</div><div class="c c4 g">45,57 %</div><div class="c c5 g">2,863 V</div><div class="c c6 g">44,00 %</div><div class="c c7 g">17,15 °C</div><div class="c c8">51.0239 / 7.81597</div><div class="c c9"><svg class="mp" width="16" height="16" viewBox="0 0 16 16"><rect x=".5" y=".5" width="15" height="15" rx=".4" fill="#fff" stroke="#5c665a" stroke-width="1"/><rect x="2" y="2" width="12" height="12" fill="#efe878"/><path d="M8 2H14V8.500L10.500 9Z" fill="#7aa8e0"/><path d="M2 11 L5.500 9 L8 11.500 L14 9.500 V14 H2Z" fill="#8fd07e"/><path d="M6.500 13.200 L14 9" stroke="#e88a2a" stroke-width="1.400"/><path d="M3.800 2.200 L10.600 13.600" stroke="#f0443c" stroke-width="1.700"/></svg></div><div class="c c10"></div></div>
<div class="r o" style="top:161px"><div class="c c1">100341</div><div class="c c2">0 d 1 h 0 min 0 sec</div><div class="c c3">16 dBm</div><div class="c c4 g">11,24 %</div><div class="c c5 g">2,836 V</div><div class="c c6 g">35,40 %</div><div class="c c7 g">17,70 °C</div><div class="c c8">51.0208 / 7.84228</div><div class="c c9"><svg class="mp" width="16" height="16" viewBox="0 0 16 16"><rect x=".5" y=".5" width="15" height="15" rx=".4" fill="#fff" stroke="#5c665a" stroke-width="1"/><rect x="2" y="2" width="12" height="12" fill="#efe878"/><path d="M8 2H14V8.500L10.500 9Z" fill="#7aa8e0"/><path d="M2 11 L5.500 9 L8 11.500 L14 9.500 V14 H2Z" fill="#8fd07e"/><path d="M6.500 13.200 L14 9" stroke="#e88a2a" stroke-width="1.400"/><path d="M3.800 2.200 L10.600 13.600" stroke="#f0443c" stroke-width="1.700"/></svg></div><div class="c c10"></div></div>
<div class="r" style="top:181px"><div class="c c1">210205</div><div class="c c2">0 d 6 h 0 min 0 sec</div><div class="c c3">12 dBm</div><div class="c c4 g">7,42 %</div><div class="c c5 g">3,659 V</div><div class="c c6 y">51,80 %</div><div class="c c7 g">12,57 °C</div><div class="c c8">51.3977 / 6.55122</div><div class="c c9"><svg class="mp" width="16" height="16" viewBox="0 0 16 16"><rect x=".5" y=".5" width="15" height="15" rx=".4" fill="#fff" stroke="#5c665a" stroke-width="1"/><rect x="2" y="2" width="12" height="12" fill="#efe878"/><path d="M8 2H14V8.500L10.500 9Z" fill="#7aa8e0"/><path d="M2 11 L5.500 9 L8 11.500 L14 9.500 V14 H2Z" fill="#8fd07e"/><path d="M6.500 13.200 L14 9" stroke="#e88a2a" stroke-width="1.400"/><path d="M3.800 2.200 L10.600 13.600" stroke="#f0443c" stroke-width="1.700"/></svg></div><div class="c c10"></div></div>
<div class="r o" style="top:201px"><div class="c c1">300102</div><div class="c c2">0 d 6 h 0 min 0 sec</div><div class="c c3">8 dBm</div><div class="c c4 g">12,85 %</div><div class="c c5 g">2,964 V</div><div class="c c6 g">44,60 %</div><div class="c c7 g">20,29 °C</div><div class="c c8">51.4043 / 6.55498</div><div class="c c9"><svg class="mp" width="16" height="16" viewBox="0 0 16 16"><rect x=".5" y=".5" width="15" height="15" rx=".4" fill="#fff" stroke="#5c665a" stroke-width="1"/><rect x="2" y="2" width="12" height="12" fill="#efe878"/><path d="M8 2H14V8.500L10.500 9Z" fill="#7aa8e0"/><path d="M2 11 L5.500 9 L8 11.500 L14 9.500 V14 H2Z" fill="#8fd07e"/><path d="M6.500 13.200 L14 9" stroke="#e88a2a" stroke-width="1.400"/><path d="M3.800 2.200 L10.600 13.600" stroke="#f0443c" stroke-width="1.700"/></svg></div><div class="c c10"></div></div>
<div class="r" style="top:221px"><div class="c c1">300104</div><div class="c c2">0 d 1 h 0 min 0 sec</div><div class="c c3">6 dBm</div><div class="c c4 g">7,17 %</div><div class="c c5 y">2,666 V</div><div class="c c6 y">59,50 %</div><div class="c c7 g">21,57 °C</div><div class="c c8">51.3977 / 6.55122</div><div class="c c9"><svg class="mp" width="16" height="16" viewBox="0 0 16 16"><rect x=".5" y=".5" width="15" height="15" rx=".4" fill="#fff" stroke="#5c665a" stroke-width="1"/><rect x="2" y="2" width="12" height="12" fill="#efe878"/><path d="M8 2H14V8.500L10.500 9Z" fill="#7aa8e0"/><path d="M2 11 L5.500 9 L8 11.500 L14 9.500 V14 H2Z" fill="#8fd07e"/><path d="M6.500 13.200 L14 9" stroke="#e88a2a" stroke-width="1.400"/><path d="M3.800 2.200 L10.600 13.600" stroke="#f0443c" stroke-width="1.700"/></svg></div><div class="c c10"></div></div>
<div class="r o" style="top:241px"><div class="c c1">300105</div><div class="c c2">0 d 6 h 0 min 0 sec</div><div class="c c3">14 dBm</div><div class="c c4 g">12,57 %</div><div class="c c5 g">2,913 V</div><div class="c c6 y">50,30 %</div><div class="c c7 g">21,57 °C</div><div class="c c8">51.5687 / 6.52508</div><div class="c c9"><svg class="mp" width="16" height="16" viewBox="0 0 16 16"><rect x=".5" y=".5" width="15" height="15" rx=".4" fill="#fff" stroke="#5c665a" stroke-width="1"/><rect x="2" y="2" width="12" height="12" fill="#efe878"/><path d="M8 2H14V8.500L10.500 9Z" fill="#7aa8e0"/><path d="M2 11 L5.500 9 L8 11.500 L14 9.500 V14 H2Z" fill="#8fd07e"/><path d="M6.500 13.200 L14 9" stroke="#e88a2a" stroke-width="1.400"/><path d="M3.800 2.200 L10.600 13.600" stroke="#f0443c" stroke-width="1.700"/></svg></div><div class="c c10"></div></div>
<div class="r" style="top:261px"><div class="c c1">300106</div><div class="c c2">0 d 6 h 0 min 0 sec</div><div class="c c3">11 dBm</div><div class="c c4 g">25,03 %</div><div class="c c5 g">2,999 V</div><div class="c c6 g">43,80 %</div><div class="c c7 g">18,35 °C</div><div class="c c8">51.4024 / 6.54032</div><div class="c c9"><svg class="mp" width="16" height="16" viewBox="0 0 16 16"><rect x=".5" y=".5" width="15" height="15" rx=".4" fill="#fff" stroke="#5c665a" stroke-width="1"/><rect x="2" y="2" width="12" height="12" fill="#efe878"/><path d="M8 2H14V8.500L10.500 9Z" fill="#7aa8e0"/><path d="M2 11 L5.500 9 L8 11.500 L14 9.500 V14 H2Z" fill="#8fd07e"/><path d="M6.500 13.200 L14 9" stroke="#e88a2a" stroke-width="1.400"/><path d="M3.800 2.200 L10.600 13.600" stroke="#f0443c" stroke-width="1.700"/></svg></div><div class="c c10"></div></div>
<div class="r o" style="top:281px"><div class="c c1">300120</div><div class="c c2">0 d 6 h 0 min 0 sec</div><div class="c c3">9 dBm</div><div class="c c4 g">10,77 %</div><div class="c c5 g">3,208 V</div><div class="c c6 g">46,00 %</div><div class="c c7 g">19,41 °C</div><div class="c c8">51.5677 / 6.53324</div><div class="c c9"><svg class="mp" width="16" height="16" viewBox="0 0 16 16"><rect x=".5" y=".5" width="15" height="15" rx=".4" fill="#fff" stroke="#5c665a" stroke-width="1"/><rect x="2" y="2" width="12" height="12" fill="#efe878"/><path d="M8 2H14V8.500L10.500 9Z" fill="#7aa8e0"/><path d="M2 11 L5.500 9 L8 11.500 L14 9.500 V14 H2Z" fill="#8fd07e"/><path d="M6.500 13.200 L14 9" stroke="#e88a2a" stroke-width="1.400"/><path d="M3.800 2.200 L10.600 13.600" stroke="#f0443c" stroke-width="1.700"/></svg></div><div class="c c10"></div></div>
<div class="r" style="top:301px"><div class="c c1">300121</div><div class="c c2">0 d 6 h 0 min 0 sec</div><div class="c c3">8 dBm</div><div class="c c4 g">12,74 %</div><div class="c c5 g">3,189 V</div><div class="c c6 g">43,70 %</div><div class="c c7 g">19,95 °C</div><div class="c c8">51.5753 / 6.53287</div><div class="c c9"><svg class="mp" width="16" height="16" viewBox="0 0 16 16"><rect x=".5" y=".5" width="15" height="15" rx=".4" fill="#fff" stroke="#5c665a" stroke-width="1"/><rect x="2" y="2" width="12" height="12" fill="#efe878"/><path d="M8 2H14V8.500L10.500 9Z" fill="#7aa8e0"/><path d="M2 11 L5.500 9 L8 11.500 L14 9.500 V14 H2Z" fill="#8fd07e"/><path d="M6.500 13.200 L14 9" stroke="#e88a2a" stroke-width="1.400"/><path d="M3.800 2.200 L10.600 13.600" stroke="#f0443c" stroke-width="1.700"/></svg></div><div class="c c10"></div></div>
<div class="r o" style="top:321px"><div class="c c1">A80001</div><div class="c c2">0 d 1 h 0 min 0 sec</div><div class="c c3">19 dBm</div><div class="c c4 g">19,85 %</div><div class="c c5 g">12,249 V</div><div class="c c6 rd">78,50 %</div><div class="c c7 g">14,71 °C</div><div class="c c8">51.4721 / 7.12779</div><div class="c c9"><svg class="mp" width="16" height="16" viewBox="0 0 16 16"><rect x=".5" y=".5" width="15" height="15" rx=".4" fill="#fff" stroke="#5c665a" stroke-width="1"/><rect x="2" y="2" width="12" height="12" fill="#efe878"/><path d="M8 2H14V8.500L10.500 9Z" fill="#7aa8e0"/><path d="M2 11 L5.500 9 L8 11.500 L14 9.500 V14 H2Z" fill="#8fd07e"/><path d="M6.500 13.200 L14 9" stroke="#e88a2a" stroke-width="1.400"/><path d="M3.800 2.200 L10.600 13.600" stroke="#f0443c" stroke-width="1.700"/></svg></div><div class="c c10"></div></div>
<div class="r" style="top:341px"><div class="c c1">A80002</div><div class="c c2">0 d 1 h 0 min 0 sec</div><div class="c c3">9 dBm</div><div class="c c4 g">51,13 %</div><div class="c c5 g">12,079 V</div><div class="c c6 g">0,00 %</div><div class="c c7 g">4,41 °C</div><div class="c c8">51.1187 / 7.69653</div><div class="c c9"><svg class="mp" width="16" height="16" viewBox="0 0 16 16"><rect x=".5" y=".5" width="15" height="15" rx=".4" fill="#fff" stroke="#5c665a" stroke-width="1"/><rect x="2" y="2" width="12" height="12" fill="#efe878"/><path d="M8 2H14V8.500L10.500 9Z" fill="#7aa8e0"/><path d="M2 11 L5.500 9 L8 11.500 L14 9.500 V14 H2Z" fill="#8fd07e"/><path d="M6.500 13.200 L14 9" stroke="#e88a2a" stroke-width="1.400"/><path d="M3.800 2.200 L10.600 13.600" stroke="#f0443c" stroke-width="1.700"/></svg></div><div class="c c10"></div></div>
<div class="r o" style="top:361px"><div class="c c1">A80003</div><div class="c c2">0 d 0 h 30 min 0 sec</div><div class="c c3">9 dBm</div><div class="c c4 y">85,94 %</div><div class="c c5 g">12,108 V</div><div class="c c6 g">46,90 %</div><div class="c c7 g">15,17 °C</div><div class="c c8">51.4943 / 7.29967</div><div class="c c9"><svg class="mp" width="16" height="16" viewBox="0 0 16 16"><rect x=".5" y=".5" width="15" height="15" rx=".4" fill="#fff" stroke="#5c665a" stroke-width="1"/><rect x="2" y="2" width="12" height="12" fill="#efe878"/><path d="M8 2H14V8.500L10.500 9Z" fill="#7aa8e0"/><path d="M2 11 L5.500 9 L8 11.500 L14 9.500 V14 H2Z" fill="#8fd07e"/><path d="M6.500 13.200 L14 9" stroke="#e88a2a" stroke-width="1.400"/><path d="M3.800 2.200 L10.600 13.600" stroke="#f0443c" stroke-width="1.700"/></svg></div><div class="c c10"></div></div>
<div class="r" style="top:381px"><div class="c c1">A80005</div><div class="c c2">0 d 1 h 0 min 0 sec</div><div class="c c3">1 dBm</div><div class="c c4 g">67,44 %</div><div class="c c5 g">11,758 V</div><div class="c c6 rd">89,00 %</div><div class="c c7 g">14,84 °C</div><div class="c c8">51.4007 / 6.54957</div><div class="c c9"><svg class="mp" width="16" height="16" viewBox="0 0 16 16"><rect x=".5" y=".5" width="15" height="15" rx=".4" fill="#fff" stroke="#5c665a" stroke-width="1"/><rect x="2" y="2" width="12" height="12" fill="#efe878"/><path d="M8 2H14V8.500L10.500 9Z" fill="#7aa8e0"/><path d="M2 11 L5.500 9 L8 11.500 L14 9.500 V14 H2Z" fill="#8fd07e"/><path d="M6.500 13.200 L14 9" stroke="#e88a2a" stroke-width="1.400"/><path d="M3.800 2.200 L10.600 13.600" stroke="#f0443c" stroke-width="1.700"/></svg></div><div class="c c10"></div></div>
<div class="r o" style="top:401px"><div class="c c1">A80007</div><div class="c c2">0 d 1 h 0 min 0 sec</div><div class="c c3">14 dBm</div><div class="c c4 g">0,29 %</div><div class="c c5 y">9,616 V</div><div class="c c6 g">13,80 %</div><div class="c c7 g">26,70 °C</div><div class="c c8">50.9902 / 7.74972</div><div class="c c9"><svg class="mp" width="16" height="16" viewBox="0 0 16 16"><rect x=".5" y=".5" width="15" height="15" rx=".4" fill="#fff" stroke="#5c665a" stroke-width="1"/><rect x="2" y="2" width="12" height="12" fill="#efe878"/><path d="M8 2H14V8.500L10.500 9Z" fill="#7aa8e0"/><path d="M2 11 L5.500 9 L8 11.500 L14 9.500 V14 H2Z" fill="#8fd07e"/><path d="M6.500 13.200 L14 9" stroke="#e88a2a" stroke-width="1.400"/><path d="M3.800 2.200 L10.600 13.600" stroke="#f0443c" stroke-width="1.700"/></svg></div><div class="c c10"></div></div>
<div class="r" style="top:421px"><div class="c c1">A80008</div><div class="c c2">0 d 1 h 0 min 0 sec</div><div class="c c3">9 dBm</div><div class="c c4 g">60,27 %</div><div class="c c5 g">11,499 V</div><div class="c c6 g">19,20 %</div><div class="c c7 g">0,23 °C</div><div class="c c8">50.9902 / 7.74972</div><div class="c c9"><svg class="mp" width="16" height="16" viewBox="0 0 16 16"><rect x=".5" y=".5" width="15" height="15" rx=".4" fill="#fff" stroke="#5c665a" stroke-width="1"/><rect x="2" y="2" width="12" height="12" fill="#efe878"/><path d="M8 2H14V8.500L10.500 9Z" fill="#7aa8e0"/><path d="M2 11 L5.500 9 L8 11.500 L14 9.500 V14 H2Z" fill="#8fd07e"/><path d="M6.500 13.200 L14 9" stroke="#e88a2a" stroke-width="1.400"/><path d="M3.800 2.200 L10.600 13.600" stroke="#f0443c" stroke-width="1.700"/></svg></div><div class="c c10"></div></div>
<div class="r o" style="top:441px"><div class="c c1">A80009</div><div class="c c2">0 d 0 h 30 min 0 sec</div><div class="c c3">11 dBm</div><div class="c c4 g">4,61 %</div><div class="c c5 g">12,559 V</div><div class="c c6 y">59,20 %</div><div class="c c7 g">16,52 °C</div><div class="c c8">51.5699 / 6.52578</div><div class="c c9"><svg class="mp" width="16" height="16" viewBox="0 0 16 16"><rect x=".5" y=".5" width="15" height="15" rx=".4" fill="#fff" stroke="#5c665a" stroke-width="1"/><rect x="2" y="2" width="12" height="12" fill="#efe878"/><path d="M8 2H14V8.500L10.500 9Z" fill="#7aa8e0"/><path d="M2 11 L5.500 9 L8 11.500 L14 9.500 V14 H2Z" fill="#8fd07e"/><path d="M6.500 13.200 L14 9" stroke="#e88a2a" stroke-width="1.400"/><path d="M3.800 2.200 L10.600 13.600" stroke="#f0443c" stroke-width="1.700"/></svg></div><div class="c c10"></div></div>
<div class="r" style="top:461px"><div class="c c1">A80010</div><div class="c c2">0 d 1 h 0 min 0 sec</div><div class="c c3">9 dBm</div><div class="c c4 g">75,84 %</div><div class="c c5 g">11,661 V</div><div class="c c6 rd">86,90 %</div><div class="c c7 g">13,13 °C</div><div class="c c8">51.0909 / 7.89833</div><div class="c c9"><svg class="mp" width="16" height="16" viewBox="0 0 16 16"><rect x=".5" y=".5" width="15" height="15" rx=".4" fill="#fff" stroke="#5c665a" stroke-width="1"/><rect x="2" y="2" width="12" height="12" fill="#efe878"/><path d="M8 2H14V8.500L10.500 9Z" fill="#7aa8e0"/><path d="M2 11 L5.500 9 L8 11.500 L14 9.500 V14 H2Z" fill="#8fd07e"/><path d="M6.500 13.200 L14 9" stroke="#e88a2a" stroke-width="1.400"/><path d="M3.800 2.200 L10.600 13.600" stroke="#f0443c" stroke-width="1.700"/></svg></div><div class="c c10"></div></div>
<div class="a vtrack" style="left:1067px;top:21px;width:16px;height:457px"></div>
<div class="sb" style="left:1068px;top:22px;width:14px;height:15px"><svg style="left:-1px;top:-1px" width="14" height="15"><path d="M4 9.500H10L7 5.500Z" fill="#222"/></svg></div>
<div class="th" style="left:1068px;top:38px;width:14px;height:370px;background:linear-gradient(to right,#f6f6f6,#dcdcdc 60%,#c6c6c6)"></div>
<div class="sb" style="left:1068px;top:461px;width:14px;height:15px"><svg style="left:-1px;top:-1px" width="14" height="15"><path d="M4 6H10L7 10Z" fill="#222"/></svg></div>
</div>
<div class="a" style="left:275px;top:628px;width:1085px;height:17px;background:#f1f1f1;font-size:12.2px;color:#08080f;padding:2px 0 0 3px;letter-spacing:0;white-space:nowrap;transform-origin:0 0"><span style="display:inline-block;transform-origin:0 0;transform:scaleX(.937)">25 Zeilen | Letzte Aktualisierung: 01.10.2012 12:34</span></div>
<div class="a" style="left:1362px;top:129px;width:2px;height:516px;background:#a9a9a9"></div>
</body></html>
